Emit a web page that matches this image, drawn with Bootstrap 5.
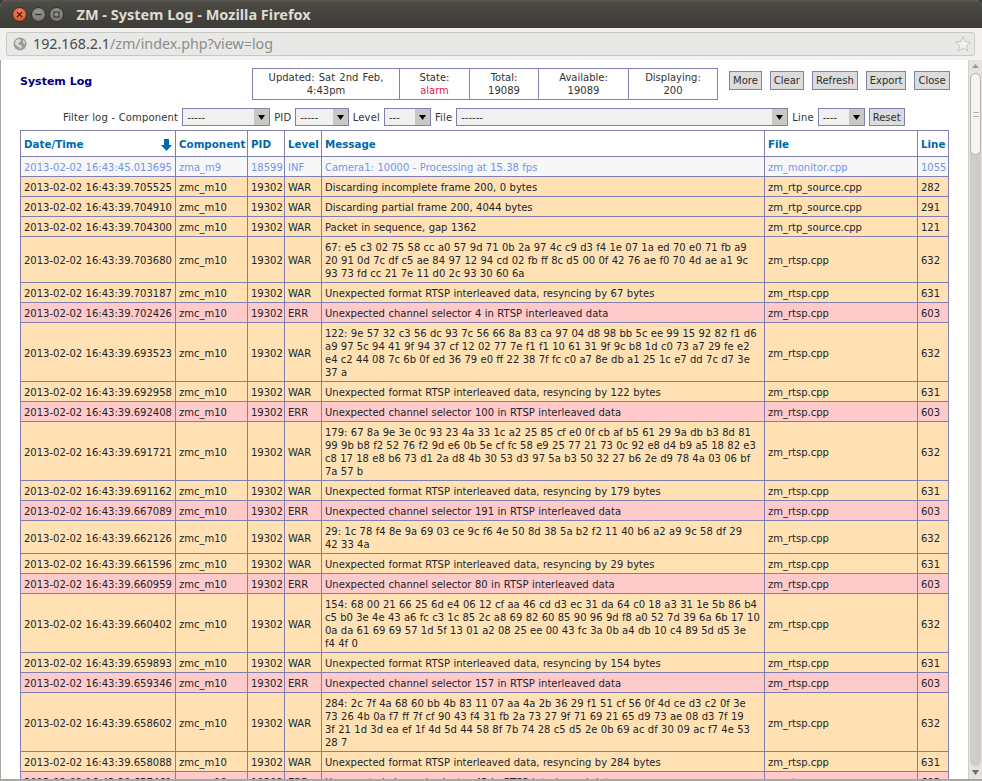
<!DOCTYPE html>
<html lang="en">
<head>
<meta charset="utf-8">
<title>ZM - System Log - Mozilla Firefox</title>
<link href="https://cdn.jsdelivr.net/npm/bootstrap@5.3.0/dist/css/bootstrap.min.css" rel="stylesheet">
<style>
html,body{height:100%;margin:0;overflow:hidden;background:#3c3b37}
body{font-family:"DejaVu Sans",sans-serif;font-size:10px;line-height:13px;color:#000}
.win{width:982px;height:781px;border-radius:7px 7px 0 0;overflow:hidden;background:#a8a7a2}
.titlebar{height:28px;flex:none;background:linear-gradient(#57564f 0,#4b4a44 3px,#3c3b37 100%);padding-left:12px;color:#dfdbd2}
.wbtn{width:15px;height:15px;border-radius:50%;display:flex;align-items:center;justify-content:center;background:radial-gradient(circle at 50% 35%,#9a9992,#6e6d67);border:1px solid #33322e;margin-right:3.5px}
.wbtn.close-w{background:radial-gradient(circle at 50% 35%,#f58a5c,#d8431a);}
.wtitle{font-family:"Noto Sans",sans-serif;font-weight:700;font-size:14.5px;margin-left:9px;line-height:28px;white-space:nowrap}
.urlwrap{height:32px;flex:none;background:#f2f1f0;padding:4px 7px 4px 6px}
.urlbar{height:24px;background:#e8e8e6;border:1px solid #c9c8c5;border-radius:3px;padding:0 2px 0 6px;font-family:"Noto Sans",sans-serif;font-size:14.3px;line-height:22px;color:#4a4a48}
.urlbar .rest{color:#8d8d8b}
.urlbar svg{margin-right:6px}
.viewport{flex:1 1 auto;min-height:0;margin:0 0 2px 1px;background:#fff}
.pagearea{flex:1 1 auto;min-width:0;padding:8px 19px 0 19px;overflow:hidden}
.sb{width:14px;flex:none;background:#e4e3e0;border-left:1px solid #cfcec9;padding:0 1px}
.sb-arrow{height:13px;flex:none;display:flex;align-items:center;justify-content:center}
.sb-track{flex:1 1 auto;background:#cfcdca;border-radius:6px;min-height:0}
.sb-thumb{height:82px;background:#f5f4f2;border:1px solid #b5b4af;border-radius:6px;display:flex;align-items:center;justify-content:center}
.sb-grip{width:6px;height:5px;border-top:1px solid #b5b4af;border-bottom:1px solid #b5b4af}
.head-row{height:32px}
.page-title{font-weight:700;font-size:11px;color:#000080;width:232px;flex:none;margin-top:-5px}
.info{width:465px;flex:none;table-layout:fixed;border-collapse:collapse;color:#333;word-spacing:1px}
.info td{border:1px solid #7f7fb2;padding:2px 3px;text-align:center;vertical-align:middle}
.alarm{color:#e8174a}
.zbtn{font-family:inherit;font-size:10px;line-height:13px;color:#2e2e2e;background:#dcdcdc;border:1px solid #7f7fb2;padding:0 3px;height:19px;border-radius:0}
.zbtn:hover{background:#dcdcdc;color:#2e2e2e;border-color:#7f7fb2}
.btns{margin-left:11px;gap:8px;align-self:flex-start;margin-top:3px}
.filter{height:18px;margin-top:8px;margin-bottom:4px;padding-left:43px;color:#333;white-space:nowrap;gap:4px;word-spacing:.2px;letter-spacing:.15px}
.zsel{font-family:inherit;font-size:10px;line-height:13px;color:#333;height:18px;padding:0 16px 0 4px;border:1px solid #7f7fb2;border-radius:0;background-color:#f0f0ee;background-image:url("data:image/svg+xml,%3Csvg xmlns='http://www.w3.org/2000/svg' width='15' height='16'%3E%3Crect width='15' height='16' fill='%23c9c8c5'/%3E%3Cpath d='M4 6h7l-3.5 5z' fill='%23000'/%3E%3C/svg%3E");background-repeat:no-repeat;background-position:right 0 center;background-size:15px 16px;box-shadow:none}
.w-comp{width:88px}.w-pid{width:53.5px}.w-lev{width:47px}.w-file{width:332px}.w-line{width:47px}
.zbtn.reset{height:18px}
.log{width:928px;table-layout:fixed;border-collapse:collapse;margin:0;word-spacing:.3px}
.log>*>tr>*{border:1px solid #7f7fb2;padding:4px 3px 2px;vertical-align:middle;background:transparent;color:inherit;box-shadow:none;line-height:13px}
.log thead th{font-weight:700;color:#0069a6;height:26px;background:#fff;white-space:nowrap;font-size:10.3px}
.log tbody tr.war>td{background:#ffe1b3}
.log tbody tr.err>td{background:#ffcaca}
.log tbody tr.inf>td{background:#f7f7f7;color:#7295e6}
.log td.hex{white-space:nowrap;word-spacing:.15px}
</style>
</head>
<body>
<div class="win d-flex flex-column">
  <div class="titlebar d-flex align-items-center">
    <span class="wbtn close-w"><svg width="7" height="7" viewBox="0 0 7 7"><path d="M1 1l5 5M6 1L1 6" stroke="#4a1a08" stroke-width="1.3"/></svg></span>
    <span class="wbtn"><svg width="7" height="7" viewBox="0 0 7 7"><path d="M0.5 3.5h6" stroke="#3a3935" stroke-width="1.3"/></svg></span>
    <span class="wbtn"><svg width="7" height="7" viewBox="0 0 7 7"><rect x="1" y="1" width="5" height="5" fill="none" stroke="#3a3935" stroke-width="1.2"/></svg></span>
    <span class="wtitle">ZM - System Log - Mozilla Firefox</span>
  </div>
  <div class="urlwrap">
    <div class="urlbar d-flex align-items-center">
      <svg width="14" height="14" viewBox="0 0 14 14"><circle cx="7" cy="7" r="6.5" fill="#9c9c9a"/><path d="M3 3l3-1 2 1-1 2-2 1 1 2 2 0 1 2-2 2-1-2-2-1-2-2zM10 3l2 2 0 2-2-1z" fill="#dcdcda"/></svg>
      <span>192.168.2.1<span class="rest">/zm/index.php?view=log</span></span>
      <svg class="ms-auto me-0" width="18" height="18" viewBox="0 0 18 18"><path d="M9 1.5l2.2 5 5.3.5-4 3.6 1.2 5.3L9 13.1l-4.7 2.8 1.2-5.3-4-3.6 5.3-.5z" fill="#f1f1ef" stroke="#c6c5c2"/></svg>
    </div>
  </div>
  <div class="viewport d-flex">
    <div class="pagearea">
      <div class="head-row d-flex align-items-center">
        <div class="page-title">System Log</div>
        <table class="info">
          <colgroup><col style="width:147px"><col style="width:70px"><col style="width:69px"><col style="width:90px"><col style="width:89px"></colgroup>
          <tr><td>Updated: Sat 2nd Feb, 4:43pm</td><td>State:<br><span class="alarm">alarm</span></td><td>Total:<br>19089</td><td>Available:<br>19089</td><td>Displaying:<br>200</td></tr>
        </table>
        <div class="btns d-flex align-items-start">
          <button type="button" class="btn zbtn">More</button>
          <button type="button" class="btn zbtn">Clear</button>
          <button type="button" class="btn zbtn">Refresh</button>
          <button type="button" class="btn zbtn">Export</button>
          <button type="button" class="btn zbtn">Close</button>
        </div>
      </div>
      <div class="filter d-flex align-items-center">
        <span>Filter log - Component</span>
        <select class="form-select zsel w-comp"><option>-----</option></select>
        <span>PID</span>
        <select class="form-select zsel w-pid"><option>-----</option></select>
        <span>Level</span>
        <select class="form-select zsel w-lev"><option>---</option></select>
        <span>File</span>
        <select class="form-select zsel w-file"><option>------</option></select>
        <span>Line</span>
        <select class="form-select zsel w-line"><option>----</option></select>
        <button type="button" class="btn zbtn reset">Reset</button>
      </div>
      <table class="table log">
        <colgroup><col style="width:155px"><col style="width:72px"><col style="width:37px"><col style="width:37px"><col style="width:443px"><col style="width:153px"><col style="width:31px"></colgroup>
        <thead><tr>
          <th><div class="d-flex justify-content-between align-items-center"><span>Date/Time</span><svg width="11" height="12" viewBox="0 0 11 12"><path d="M3 0h5v6h3L5.5 12 0 6h3z" fill="#0069a6"/></svg></div></th>
          <th>Component</th><th>PID</th><th>Level</th><th>Message</th><th>File</th><th>Line</th>
        </tr></thead>
        <tbody>
<tr class="inf"><td>2013-02-02 16:43:45.013695</td><td>zma_m9</td><td>18599</td><td>INF</td><td>Camera1: 10000 - Processing at 15.38 fps</td><td>zm_monitor.cpp</td><td>1055</td></tr>
<tr class="war"><td>2013-02-02 16:43:39.705525</td><td>zmc_m10</td><td>19302</td><td>WAR</td><td>Discarding incomplete frame 200, 0 bytes</td><td>zm_rtp_source.cpp</td><td>282</td></tr>
<tr class="war"><td>2013-02-02 16:43:39.704910</td><td>zmc_m10</td><td>19302</td><td>WAR</td><td>Discarding partial frame 200, 4044 bytes</td><td>zm_rtp_source.cpp</td><td>291</td></tr>
<tr class="war"><td>2013-02-02 16:43:39.704300</td><td>zmc_m10</td><td>19302</td><td>WAR</td><td>Packet in sequence, gap 1362</td><td>zm_rtp_source.cpp</td><td>121</td></tr>
<tr class="war"><td>2013-02-02 16:43:39.703680</td><td>zmc_m10</td><td>19302</td><td>WAR</td><td class="hex">67: e5 c3 02 75 58 cc a0 57 9d 71 0b 2a 97 4c c9 d3 f4 1e 07 1a ed 70 e0 71 fb a9<br>20 91 0d 7c df c5 ae 84 97 12 94 cd 02 fb ff 8c d5 00 0f 42 76 ae f0 70 4d ae a1 9c<br>93 73 fd cc 21 7e 11 d0 2c 93 30 60 6a</td><td>zm_rtsp.cpp</td><td>632</td></tr>
<tr class="war"><td>2013-02-02 16:43:39.703187</td><td>zmc_m10</td><td>19302</td><td>WAR</td><td>Unexpected format RTSP interleaved data, resyncing by 67 bytes</td><td>zm_rtsp.cpp</td><td>631</td></tr>
<tr class="err"><td>2013-02-02 16:43:39.702426</td><td>zmc_m10</td><td>19302</td><td>ERR</td><td>Unexpected channel selector 4 in RTSP interleaved data</td><td>zm_rtsp.cpp</td><td>603</td></tr>
<tr class="war"><td>2013-02-02 16:43:39.693523</td><td>zmc_m10</td><td>19302</td><td>WAR</td><td class="hex">122: 9e 57 32 c3 56 dc 93 7c 56 66 8a 83 ca 97 04 d8 98 bb 5c ee 99 15 92 82 f1 d6<br>a9 97 5c 94 41 9f 94 37 cf 12 02 77 7e f1 f1 10 61 31 9f 9c b8 1d c0 73 a7 29 fe e2<br>e4 c2 44 08 7c 6b 0f ed 36 79 e0 ff 22 38 7f fc c0 a7 8e db a1 25 1c e7 dd 7c d7 3e<br>37 a</td><td>zm_rtsp.cpp</td><td>632</td></tr>
<tr class="war"><td>2013-02-02 16:43:39.692958</td><td>zmc_m10</td><td>19302</td><td>WAR</td><td>Unexpected format RTSP interleaved data, resyncing by 122 bytes</td><td>zm_rtsp.cpp</td><td>631</td></tr>
<tr class="err"><td>2013-02-02 16:43:39.692408</td><td>zmc_m10</td><td>19302</td><td>ERR</td><td>Unexpected channel selector 100 in RTSP interleaved data</td><td>zm_rtsp.cpp</td><td>603</td></tr>
<tr class="war"><td>2013-02-02 16:43:39.691721</td><td>zmc_m10</td><td>19302</td><td>WAR</td><td class="hex">179: 67 8a 9e 3e 0c 93 23 4a 33 1c a2 25 85 cf e0 0f cb af b5 61 29 9a db b3 8d 81<br>99 9b b8 f2 52 76 f2 9d e6 0b 5e cf fc 58 e9 25 77 21 73 0c 92 e8 d4 b9 a5 18 82 e3<br>c8 17 18 e8 b6 73 d1 2a d8 4b 30 53 d3 97 5a b3 50 32 27 b6 2e d9 78 4a 03 06 bf<br>7a 57 b</td><td>zm_rtsp.cpp</td><td>632</td></tr>
<tr class="war"><td>2013-02-02 16:43:39.691162</td><td>zmc_m10</td><td>19302</td><td>WAR</td><td>Unexpected format RTSP interleaved data, resyncing by 179 bytes</td><td>zm_rtsp.cpp</td><td>631</td></tr>
<tr class="err"><td>2013-02-02 16:43:39.667089</td><td>zmc_m10</td><td>19302</td><td>ERR</td><td>Unexpected channel selector 191 in RTSP interleaved data</td><td>zm_rtsp.cpp</td><td>603</td></tr>
<tr class="war"><td>2013-02-02 16:43:39.662126</td><td>zmc_m10</td><td>19302</td><td>WAR</td><td class="hex">29: 1c 78 f4 8e 9a 69 03 ce 9c f6 4e 50 8d 38 5a b2 f2 11 40 b6 a2 a9 9c 58 df 29<br>42 33 4a</td><td>zm_rtsp.cpp</td><td>632</td></tr>
<tr class="war"><td>2013-02-02 16:43:39.661596</td><td>zmc_m10</td><td>19302</td><td>WAR</td><td>Unexpected format RTSP interleaved data, resyncing by 29 bytes</td><td>zm_rtsp.cpp</td><td>631</td></tr>
<tr class="err"><td>2013-02-02 16:43:39.660959</td><td>zmc_m10</td><td>19302</td><td>ERR</td><td>Unexpected channel selector 80 in RTSP interleaved data</td><td>zm_rtsp.cpp</td><td>603</td></tr>
<tr class="war"><td>2013-02-02 16:43:39.660402</td><td>zmc_m10</td><td>19302</td><td>WAR</td><td class="hex">154: 68 00 21 66 25 6d e4 06 12 cf aa 46 cd d3 ec 31 da 64 c0 18 a3 31 1e 5b 86 b4<br>c5 b0 3e 4e 43 a6 fc c3 1c 85 2c a8 69 82 60 85 90 96 9d f8 a0 52 7d 39 6a 6b 17 10<br>0a da 61 69 69 57 1d 5f 13 01 a2 08 25 ee 00 43 fc 3a 0b a4 db 10 c4 89 5d d5 3e<br>f4 4f 0</td><td>zm_rtsp.cpp</td><td>632</td></tr>
<tr class="war"><td>2013-02-02 16:43:39.659893</td><td>zmc_m10</td><td>19302</td><td>WAR</td><td>Unexpected format RTSP interleaved data, resyncing by 154 bytes</td><td>zm_rtsp.cpp</td><td>631</td></tr>
<tr class="err"><td>2013-02-02 16:43:39.659346</td><td>zmc_m10</td><td>19302</td><td>ERR</td><td>Unexpected channel selector 157 in RTSP interleaved data</td><td>zm_rtsp.cpp</td><td>603</td></tr>
<tr class="war"><td>2013-02-02 16:43:39.658602</td><td>zmc_m10</td><td>19302</td><td>WAR</td><td class="hex">284: 2c 7f 4a 68 60 bb 4b 83 11 07 aa 4a 2b 36 29 f1 51 cf 56 0f 4d ce d3 c2 0f 3e<br>73 26 4b 0a f7 ff 7f cf 90 43 f4 31 fb 2a 73 27 9f 71 69 21 65 d9 73 ae 08 d3 7f 19<br>3f 21 1d 3d ea ef 1f 4d 5d 44 58 8f 7b 74 28 c5 d5 2e 0b 69 ac df 30 09 ac f7 4e 53<br>28 7</td><td>zm_rtsp.cpp</td><td>632</td></tr>
<tr class="war"><td>2013-02-02 16:43:39.658088</td><td>zmc_m10</td><td>19302</td><td>WAR</td><td>Unexpected format RTSP interleaved data, resyncing by 284 bytes</td><td>zm_rtsp.cpp</td><td>631</td></tr>
<tr class="err"><td>2013-02-02 16:43:39.657461</td><td>zmc_m10</td><td>19302</td><td>ERR</td><td>Unexpected channel selector 43 in RTSP interleaved data</td><td>zm_rtsp.cpp</td><td>603</td></tr>
        </tbody>
      </table>
    </div>
    <div class="sb d-flex flex-column">
      <div class="sb-arrow"><svg width="7" height="5"><path d="M0 4h7L3.5 0z" fill="#9b9a96"/></svg></div>
      <div class="sb-track"><div class="sb-thumb"><div class="sb-grip"></div></div></div>
      <div class="sb-arrow"><svg width="7" height="5"><path d="M0 0h7L3.5 5z" fill="#6e6d69"/></svg></div>
    </div>
  </div>
</div>
<script src="https://cdn.jsdelivr.net/npm/bootstrap@5.3.0/dist/js/bootstrap.bundle.min.js"></script>
</body>
</html>
